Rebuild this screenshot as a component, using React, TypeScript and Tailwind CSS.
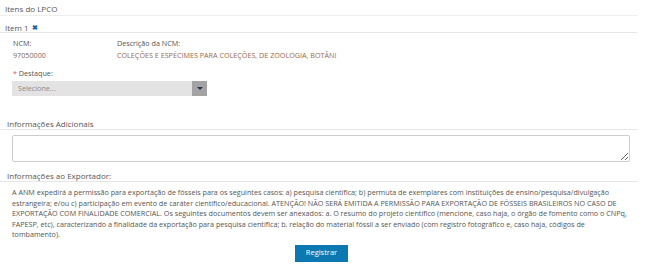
import React from 'react';

const exportText =
    'A ANM expedirá a permissão para exportação de fósseis para os seguintes casos: a) pesquisa científica; b) permuta de exemplares com instituições de ensino/pesquisa/divulgação estrangeira; e/ou c) participação em evento de caráter científico/educacional. ATENÇÃO! NÃO SERÁ EMITIDA A PERMISSÃO PARA EXPORTAÇÃO DE FÓSSEIS BRASILEIROS NO CASO DE EXPORTAÇÃO COM FINALIDADE COMERCIAL. Os seguintes documentos devem ser anexados: a. O resumo do projeto científico (mencione, caso haja, o órgão de fomento como o CNPq, FAPESP, etc), caracterizando a finalidade da exportação para pesquisa científica; b. relação do material fóssil a ser enviado (com registro fotográfico e, caso haja, códigos de tombamento).';

export default function App() {
    return (
        <div className="h-[277px] w-[650px] overflow-hidden bg-white font-['Open_Sans',sans-serif] text-[#555]">
            <div className="w-[637px]">
                {/* cabeçalho */}
                <div className="border-b border-[#eeeeee] px-[5px] pt-[3px] text-[8px] leading-[12px]">Itens do LPCO</div>

                <div className="mt-[7px] flex items-center gap-[3px] border-b border-[#e6e6e6] px-[5px] text-[8px] leading-[9px]">
                    <span>Item 1</span>
                    <span className="text-[7px] font-bold text-[#1f5f9e]">✖</span>
                </div>

                <div className="mt-[4px] flex px-[13px] text-[7.2px] leading-[12px]">
                    <div className="w-[104px]">
                        <div>NCM:</div>
                        <div className="text-[#7a6a5e]">97050000</div>
                    </div>
                    <div>
                        <div>Descrição da NCM:</div>
                        <div className="text-[#9a6a4c]">COLEÇÕES E ESPÉCIMES PARA COLEÇÕES, DE ZOOLOGIA, BOTÂNI</div>
                    </div>
                </div>

                <div className="mt-[6px] px-[13px] text-[7.2px] leading-[12px]">
                    <span className="text-[#e05555]">*</span> Destaque:
                </div>
                <div className="ml-[12px] mt-[2px] flex h-[15px] w-[195px] bg-[#e3e3e3]">
                    <div className="flex-1 px-[6px] text-[7.2px] leading-[15px] text-[#8a8a8a]">Selecione...</div>
                    <div className="flex w-[15px] items-center justify-center bg-[#a3a3a3]">
                        <div className="h-0 w-0 border-x-[3px] border-t-[3px] border-x-transparent border-t-[#24364f]" />
                    </div>
                </div>

                <div className="mt-[22px] border-b border-[#e6e6e6] px-[7px] text-[8px] leading-[11px]">Informações Adicionais</div>
                <textarea className="ml-[12px] mt-[5px] block h-[27px] w-[618px] resize-y rounded-[2px] border border-[#cccccc] bg-white" />

                <div className="mt-[8px] border-b border-[#e6e6e6] px-[7px] text-[8px] leading-[11px]">Informações ao Exportador:</div>
                <p className="mt-[5px] w-[628px] pl-[12px] text-[7.2px] leading-[10.5px]">{exportText}</p>
            </div>

            <div className="mt-[5px] flex w-[643px] justify-center">
                <button className="h-[17px] w-[53px] bg-[#0b78b2] text-[7.5px] text-white">Registrar</button>
            </div>
        </div>
    );
}
